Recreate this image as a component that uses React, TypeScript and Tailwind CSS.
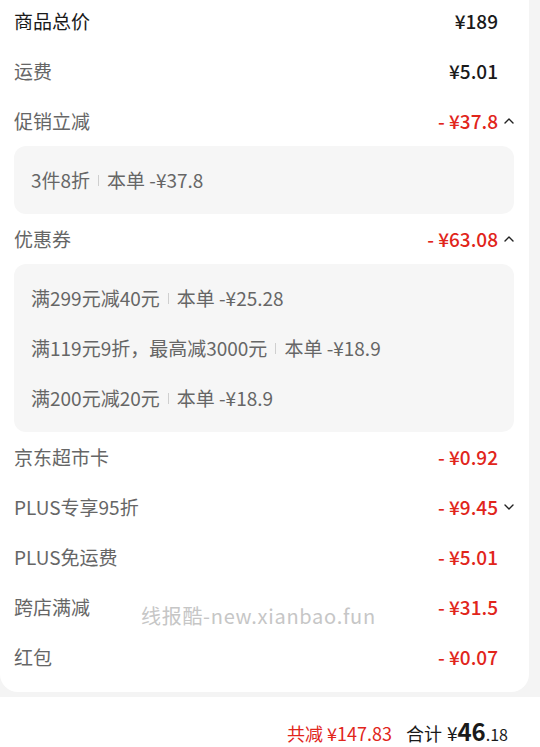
import React from 'react';

const font = { fontFamily: '"Noto Sans CJK SC", "Noto Sans", sans-serif' };

type Row = {
  label: string;
  value: string;
  red?: boolean;
  dark?: boolean;
  chevron?: 'up' | 'down';
  details?: [string, string][];
};

const rows: Row[] = [
  { label: '商品总价', value: '¥189', dark: true },
  { label: '运费', value: '¥5.01' },
  { label: '促销立减', value: '- ¥37.8', red: true, chevron: 'up', details: [['3件8折', '本单 -¥37.8']] },
  {
    label: '优惠券',
    value: '- ¥63.08',
    red: true,
    chevron: 'up',
    details: [
      ['满299元减40元', '本单 -¥25.28'],
      ['满119元9折，最高减3000元', '本单 -¥18.9'],
      ['满200元减20元', '本单 -¥18.9'],
    ],
  },
  { label: '京东超市卡', value: '- ¥0.92', red: true },
  { label: 'PLUS专享95折', value: '- ¥9.45', red: true, chevron: 'down' },
  { label: 'PLUS免运费', value: '- ¥5.01', red: true },
  { label: '跨店满减', value: '- ¥31.5', red: true },
  { label: '红包', value: '- ¥0.07', red: true },
];

function Chevron({ dir }: { dir: 'up' | 'down' }) {
  return (
    <svg width="12" height="8" viewBox="0 0 12 8" className="text-[#222]">
      <polyline
        points={dir === 'up' ? '2,6 6,2 10,6' : '2,2 6,6 10,2'}
        fill="none"
        stroke="currentColor"
        strokeWidth="1.4"
        strokeLinecap="round"
        strokeLinejoin="round"
      />
    </svg>
  );
}

export default function App() {
  return (
    <div className="h-[747px] w-[540px] bg-[#f4f4f4] overflow-hidden" style={font}>
      <div className="relative w-[529px] bg-white rounded-b-[18px] pb-[10px]">
        <div className="-mt-[4px]">
          {rows.map((r) => (
            <div key={r.label}>
              <div className="flex h-[50px] items-center pl-[14px] pr-[14px] text-[19px]">
                <span className={r.dark ? 'text-[#1a1a1a]' : 'text-[#666]'}>{r.label}</span>
                <span
                  className={
                    'ml-auto font-medium ' + (r.red ? 'text-[#e1251b]' : 'text-[#1a1a1a]')
                  }
                >
                  {r.value}
                </span>
                <span className="flex w-[17px] justify-end">
                  {r.chevron && <Chevron dir={r.chevron} />}
                </span>
              </div>
              {r.details && (
                <div className="mx-[14px] w-[500px] rounded-[12px] bg-[#f6f6f6] py-[9px] pl-[17px]">
                  {r.details.map(([a, b]) => (
                    <div key={a} className="flex h-[50px] items-center text-[19px] text-[#666]">
                      <span>{a}</span>
                      <span className="mx-[8px] h-[11px] w-px bg-[#cfcfcf]" />
                      <span>{b}</span>
                    </div>
                  ))}
                </div>
              )}
            </div>
          ))}
        </div>
        <div className="absolute left-[141px] top-[605px] text-[20px] tracking-[0.7px] text-[#c6c6c6]">
          线报酷-new.xianbao.fun
        </div>
      </div>
      <div className="mt-[5px] flex h-[50px] items-center justify-end bg-white pt-[20px] pr-[32px]">
        <div className="flex items-baseline leading-[28px]">
          <span className="text-[18px] text-[#e1251b]">共减 ¥147.83</span>
          <span className="ml-[14px] text-[18px] text-[#1a1a1a]">合计</span>
          <span className="ml-[5px] text-[19px] text-[#1a1a1a]">¥</span>
          <span className="text-[24px] font-semibold text-[#1a1a1a]">46</span>
          <span className="text-[16px] text-[#1a1a1a]">.18</span>
        </div>
      </div>
    </div>
  );
}
